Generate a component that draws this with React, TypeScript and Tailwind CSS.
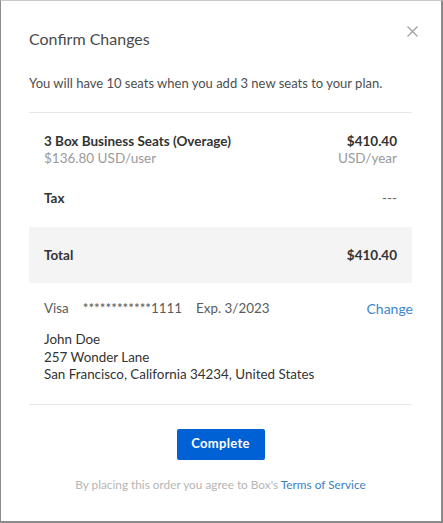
export default function App() {
  return (
    <div
      className="w-[443px] h-[523px] bg-white border-l border-t border-l-[#8c8c8c] border-t-[#c8c8c8] border-r-2 border-b-2 border-r-[#8c8c8c] border-b-[#8c8c8c] relative"
      style={{ fontFamily: "Lato, 'Open Sans', sans-serif" }}
    >
      <button className="absolute left-[404px] top-[23px] w-[14px] h-[14px] flex items-center justify-center text-[#9e9e9e]">
        <svg width="11" height="11" viewBox="0 0 11 11" fill="none" stroke="currentColor" strokeWidth="1.2">
          <path d="M0.5 0.5 L10.5 10.5 M10.5 0.5 L0.5 10.5" />
        </svg>
      </button>

      <div className="pl-[28px] pr-[29px] pt-[28px]">
        <h1 className="text-[16px] leading-[20px] text-[#4a4a4a]">Confirm Changes</h1>
        <p className="mt-[25px] text-[13px] leading-[18px] text-[#4e4e4e]">
          You will have 10 seats when you add 3 new seats to your plan.
        </p>

        <div className="mt-[20px] border-t border-[#e8e8e8]" />

        <div className="px-[15px] pt-[20px] text-[13.5px] leading-[17px] text-[#333]">
          <div className="flex justify-between">
            <div>
              <div className="font-bold">3 Box Business Seats (Overage)</div>
              <div className="text-[#9a9a9a]">$136.80 USD/user</div>
            </div>
            <div className="text-right">
              <div className="font-bold">$410.40</div>
              <div className="text-[#9a9a9a]">USD/year</div>
            </div>
          </div>
          <div className="flex justify-between mt-[23px]">
            <div className="font-bold">Tax</div>
            <div className="text-[#666]">---</div>
          </div>
        </div>

        <div className="mt-[20px] h-[56px] bg-[#f4f4f4] px-[15px] flex items-center justify-between text-[13.5px] font-bold text-[#333]">
          <div>Total</div>
          <div>$410.40</div>
        </div>

        <div className="pl-[15px] pt-[17px] text-[13.4px] leading-[17px]">
          <div className="flex items-center justify-between text-[#5a5a5a]">
            <div className="flex gap-[14px]">
              <span>Visa</span>
              <span>************1111</span>
              <span>Exp. 3/2023</span>
            </div>
            <a className="text-[#3d86cc] text-[14px] mr-[-1px]">Change</a>
          </div>
          <div className="mt-[14px] text-[#333] leading-[17.5px]">
            <div>John Doe</div>
            <div>257 Wonder Lane</div>
            <div>San Francisco, California 34234, United States</div>
          </div>
        </div>

        <div className="mt-[20px] border-t border-[#e8e8e8]" />

        <div className="flex flex-col items-center">
          <button className="mt-[24px] w-[88px] h-[31px] bg-[#0061d5] rounded-[2px] text-white text-[13px] font-bold tracking-[0.3px]">
            Complete
          </button>
          <p className="mt-[17px] text-[11.8px] leading-[16px] text-[#b5b5b5]">
            By placing this order you agree to Box's{" "}
            <a className="text-[#3d7fc0]">Terms of Service</a>
          </p>
        </div>
      </div>
    </div>
  );
}
